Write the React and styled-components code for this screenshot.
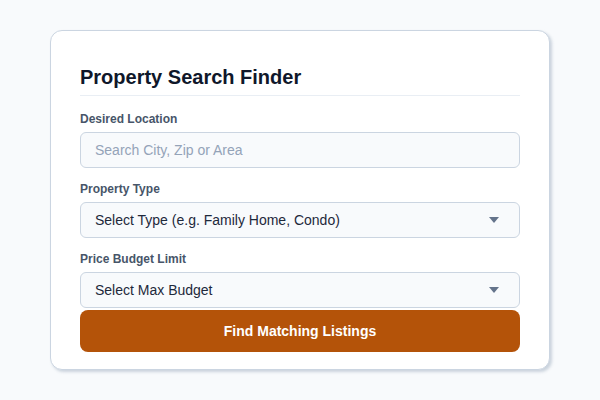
import React from "react";
import styled, { createGlobalStyle } from "styled-components";

const Global = createGlobalStyle`
  html, body { margin: 0; padding: 0; background: #f8fafc; }
  body { font-family: "Liberation Sans", Arial, sans-serif; }
  * { box-sizing: border-box; }
`;

const Page = styled.div`
  width: 600px;
  height: 400px;
  display: flex;
  align-items: center;
  justify-content: center;
  background: #f8fafc;
`;

const Card = styled.form`
  width: 500px;
  height: 340px;
  background: #ffffff;
  border: 1px solid #cbd5e1;
  border-radius: 12px;
  box-shadow: 2px 2px 3px rgba(148, 163, 184, 0.45);
  padding: 34px 29px 0;
  display: flex;
  flex-direction: column;
`;

const Title = styled.h1`
  margin: 0 0 16px;
  font-size: 20px;
  line-height: 24px;
  font-weight: 700;
  color: #0f172a;
  padding-bottom: 6px;
  border-bottom: 1px solid #e9eef4;
`;

const Group = styled.div`
  display: flex;
  flex-direction: column;
  margin-bottom: ${(p) => (p.$last ? "2px" : "14px")};
`;

const Label = styled.label`
  font-size: 12px;
  line-height: 15px;
  font-weight: 700;
  color: #475569;
  margin-bottom: 5px;
`;

const Field = styled.div`
  height: 36px;
  border: 1px solid #cbd5e1;
  border-radius: 6px;
  background: #f8fafc;
  display: flex;
  align-items: center;
  justify-content: space-between;
  padding: 0 20px 0 14px;
  font-size: 14px;
  color: ${(p) => (p.$placeholder ? "#94a3b8" : "#1e293b")};
`;

const Arrow = styled.svg`
  width: 10px;
  height: 6px;
  display: block;
`;

const Button = styled.button`
  height: 42px;
  border: none;
  border-radius: 8px;
  background: #b45309;
  color: #ffffff;
  font-family: "Liberation Sans", Arial, sans-serif;
  font-size: 14px;
  font-weight: 700;
  cursor: pointer;
`;

const Caret = () => (
  <Arrow viewBox="0 0 10 6">
    <polygon points="0,0 10,0 5,6" fill="#64748b" />
  </Arrow>
);

export default function App() {
  return (
    <Page>
      <Global />
      <Card onSubmit={(e) => e.preventDefault()}>
        <Title>Property Search Finder</Title>
        <Group>
          <Label>Desired Location</Label>
          <Field $placeholder>Search City, Zip or Area</Field>
        </Group>
        <Group>
          <Label>Property Type</Label>
          <Field>
            <span>Select Type (e.g. Family Home, Condo)</span>
            <Caret />
          </Field>
        </Group>
        <Group $last>
          <Label>Price Budget Limit</Label>
          <Field>
            <span>Select Max Budget</span>
            <Caret />
          </Field>
        </Group>
        <Button type="submit">Find Matching Listings</Button>
      </Card>
    </Page>
  );
}
